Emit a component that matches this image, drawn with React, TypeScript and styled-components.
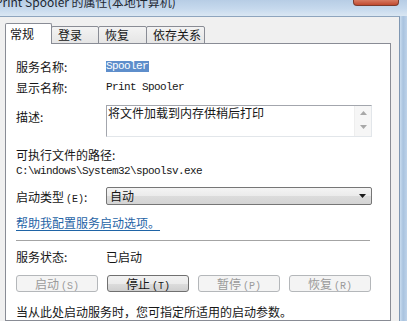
import React from "react";
import styled, { createGlobalStyle } from "styled-components";

const cjk = `"Noto Sans CJK SC", "Noto Sans", sans-serif`;
const mono = `"Liberation Mono", "DejaVu Sans Mono", monospace`;

const Global = createGlobalStyle`
  html, body { margin: 0; padding: 0; width: 407px; height: 321px; overflow: hidden; background: #c4d8ec; }
  #root { width: 407px; height: 321px; }
`;

const Window = styled.div`
  width: 407px;
  height: 321px;
  display: flex;
  flex-direction: column;
  overflow: hidden;
  font-family: ${cjk};
  font-size: 12px;
  color: #161616;
  background: #c2d6eb;
`;

const TitleBar = styled.div`
  height: 16px;
  flex: none;
  display: flex;
  align-items: flex-start;
  background: linear-gradient(180deg, #b7cde5 0%, #c6d9ed 55%, #dae7f3 100%);
`;

const TitleText = styled.div`
  margin-left: -5px;
  margin-top: -6px;
  line-height: 16px;
  font-size: 12px;
  color: #1e2833;
  white-space: nowrap;
`;

const CloseButton = styled.div`
  margin-left: auto;
  margin-right: 8px;
  width: 46px;
  height: 6px;
  box-sizing: border-box;
  background: linear-gradient(180deg, #d77a62, #c04a30);
  border: 1px solid #7c3b2d;
  border-top: none;
  border-radius: 0 0 4px 4px;
`;

const Main = styled.div`
  flex: 1;
  display: flex;
  min-height: 0;
`;

const Body = styled.div`
  width: 400px;
  flex: none;
  box-sizing: border-box;
  background: #f0f0f0;
  border-top: 1px solid #8ea5be;
  border-right: 1px solid #7f97b2;
  padding: 6px 0 0 5px;
  display: flex;
  flex-direction: column;
`;

const Frame = styled.div`
  flex: 1;
  background: linear-gradient(90deg, #c9dcef 0%, #a9c3df 45%, #bdd2e9 100%);
`;

const TabRow = styled.div`
  display: flex;
  align-items: flex-end;
  height: 21px;
  margin-bottom: -1px;
  position: relative;
  z-index: 1;
`;

const Tab = styled.div<{ $w: number; $active?: boolean }>`
  width: ${(p) => p.$w}px;
  height: ${(p) => (p.$active ? 21 : 18)}px;
  box-sizing: border-box;
  border: 1px solid #898c95;
  border-bottom: ${(p) => (p.$active ? "none" : "1px solid #898c95")};
  border-radius: 2px 2px 0 0;
  margin-left: ${(p) => (p.$active ? 0 : -1)}px;
  background: ${(p) => (p.$active ? "#ffffff" : "linear-gradient(180deg, #f3f3f3, #e5e5e5)")};
  padding-left: ${(p) => (p.$active ? 4 : 6)}px;
  line-height: ${(p) => (p.$active ? 19 : 15)}px;
  font-size: 12px;
  white-space: nowrap;
`;

const Panel = styled.div`
  width: 386px;
  flex: 1;
  box-sizing: border-box;
  background: #ffffff;
  border: 1px solid #898c95;
  padding: 12px 18px 0 10px;
  display: flex;
  flex-direction: column;
`;

const FieldRow = styled.div<{ $mt?: number }>`
  display: grid;
  grid-template-columns: 90px 1fr;
  align-items: center;
  height: 20px;
  margin-top: ${(p) => p.$mt ?? 0}px;
`;

const Label = styled.div`
  white-space: nowrap;
`;

const MonoValue = styled.div`
  font-family: ${mono};
  font-size: 11px;
  letter-spacing: -0.6px;
  white-space: nowrap;
`;

const Selected = styled.span`
  display: inline-block;
  background: #5e8ecb;
  color: #ffffff;
  line-height: 11px;
  padding: 0 1px 0 0;
`;

const DescRow = styled.div`
  display: grid;
  grid-template-columns: 90px 1fr;
  margin-top: 8px;
`;

const DescLabel = styled.div`
  padding-top: 4px;
  line-height: 16px;
`;

const TextBox = styled.div`
  height: 32px;
  box-sizing: border-box;
  border: 1px solid #a3a6ad;
  border-right-color: #e2e6ea;
  border-bottom-color: #e2e6ea;
  display: flex;
`;

const TextContent = styled.div`
  flex: 1;
  padding-left: 1px;
  line-height: 13px;
`;

const ScrollBar = styled.div`
  width: 16px;
  background: #f6f6f6;
  border-left: 1px solid #eeeeee;
  display: flex;
  flex-direction: column;
`;

const ScrollArrow = styled.div`
  height: 14px;
  display: flex;
  align-items: center;
  justify-content: center;
`;

const PlainLine = styled.div<{ $mt?: number; $mono?: boolean }>`
  margin-top: ${(p) => p.$mt ?? 0}px;
  line-height: 16px;
  white-space: nowrap;
  font-family: ${(p) => (p.$mono ? mono : "inherit")};
  font-size: ${(p) => (p.$mono ? "11px" : "12px")};
  letter-spacing: ${(p) => (p.$mono ? "-0.6px" : "normal")};
`;

const ComboRow = styled.div`
  display: grid;
  grid-template-columns: 90px 1fr;
  align-items: center;
  margin-top: 8px;
`;

const Combo = styled.div`
  height: 18px;
  box-sizing: border-box;
  border: 1px solid #767676;
  border-radius: 2px;
  background: linear-gradient(180deg, #f4f4f4 0%, #ebebeb 50%, #dcdcdc 51%, #d4d4d4 100%);
  display: flex;
  align-items: center;
  padding-left: 3px;
  padding-right: 5px;
`;

const ComboText = styled.div`
  flex: 1;
  line-height: 16px;
`;

const HelpLink = styled.a`
  display: block;
  width: fit-content;
  margin-top: 10px;
  line-height: 16px;
  color: #1f64a6;
  text-decoration: underline;
  text-underline-offset: 2px;
`;

const Separator = styled.div`
  margin-top: 9px;
  margin-right: 2px;
  height: 1px;
  background: #a4a4a4;
`;

const StatusRow = styled.div`
  display: grid;
  grid-template-columns: 90px 1fr;
  margin-top: 8px;
  line-height: 16px;
`;

const ButtonRow = styled.div`
  display: flex;
  gap: 9px;
  margin-top: 10px;
`;

const ActionButton = styled.div<{ $disabled?: boolean }>`
  width: 82px;
  height: 17px;
  box-sizing: border-box;
  border: 1px solid ${(p) => (p.$disabled ? "#b4b7ba" : "#707070")};
  border-radius: 3px;
  background: ${(p) =>
    p.$disabled
      ? "#f4f4f4"
      : "linear-gradient(180deg, #f2f2f2 0%, #ebebeb 50%, #dddddd 51%, #cfcfcf 100%)"};
  color: ${(p) => (p.$disabled ? "#9a9a9a" : "#161616")};
  line-height: 15px;
  text-align: center;
  font-size: 12px;
  white-space: nowrap;
`;

const Mnemonic = styled.span`
  font-family: ${mono};
  font-size: 10px;
  margin-left: 2px;
`;

const DownTriangle = ({ color, w = 7, h = 4 }: { color: string; w?: number; h?: number }) => (
  <svg width={w} height={h} viewBox={`0 0 ${w} ${h}`}>
    <polygon points={`0,0 ${w},0 ${w / 2},${h}`} fill={color} />
  </svg>
);

const UpTriangle = ({ color, w = 7, h = 4 }: { color: string; w?: number; h?: number }) => (
  <svg width={w} height={h} viewBox={`0 0 ${w} ${h}`}>
    <polygon points={`0,${h} ${w},${h} ${w / 2},0`} fill={color} />
  </svg>
);

const tabs = [
  { label: "常规", w: 47, active: true },
  { label: "登录", w: 48 },
  { label: "恢复", w: 49 },
  { label: "依存关系", w: 59 },
];

const buttons = [
  { label: "启动", key: "(S)", disabled: true },
  { label: "停止", key: "(T)", disabled: false },
  { label: "暂停", key: "(P)", disabled: true },
  { label: "恢复", key: "(R)", disabled: true },
];

export default function App() {
  return (
    <>
      <Global />
      <Window>
        <TitleBar>
          <TitleText>Print Spooler 的属性(本地计算机)</TitleText>
          <CloseButton />
        </TitleBar>
        <Main>
          <Body>
            <TabRow>
              {tabs.map((t) => (
                <Tab key={t.label} $w={t.w} $active={t.active}>
                  {t.label}
                </Tab>
              ))}
            </TabRow>
            <Panel>
              <FieldRow>
                <Label>服务名称:</Label>
                <MonoValue>
                  <Selected>Spooler</Selected>
                </MonoValue>
              </FieldRow>
              <FieldRow $mt={1}>
                <Label>显示名称:</Label>
                <MonoValue>Print Spooler</MonoValue>
              </FieldRow>
              <DescRow>
                <DescLabel>描述:</DescLabel>
                <TextBox>
                  <TextContent>将文件加载到内存供稍后打印</TextContent>
                  <ScrollBar>
                    <ScrollArrow>
                      <UpTriangle color="#a8a8a8" />
                    </ScrollArrow>
                    <ScrollArrow>
                      <DownTriangle color="#a8a8a8" />
                    </ScrollArrow>
                  </ScrollBar>
                </TextBox>
              </DescRow>
              <PlainLine $mt={10}>可执行文件的路径:</PlainLine>
              <PlainLine $mono>C:\windows\System32\spoolsv.exe</PlainLine>
              <ComboRow>
                <Label>
                  启动类型<Mnemonic>(E)</Mnemonic>:
                </Label>
                <Combo>
                  <ComboText>自动</ComboText>
                  <DownTriangle color="#1a1a1a" w={7} h={4} />
                </Combo>
              </ComboRow>
              <HelpLink>帮助我配置服务启动选项。</HelpLink>
              <Separator />
              <StatusRow>
                <Label>服务状态:</Label>
                <div>已启动</div>
              </StatusRow>
              <ButtonRow>
                {buttons.map((b) => (
                  <ActionButton key={b.label} $disabled={b.disabled}>
                    {b.label}
                    <Mnemonic>{b.key}</Mnemonic>
                  </ActionButton>
                ))}
              </ButtonRow>
              <PlainLine $mt={12}>当从此处启动服务时，您可指定所适用的启动参数。</PlainLine>
            </Panel>
          </Body>
          <Frame />
        </Main>
      </Window>
    </>
  );
}
